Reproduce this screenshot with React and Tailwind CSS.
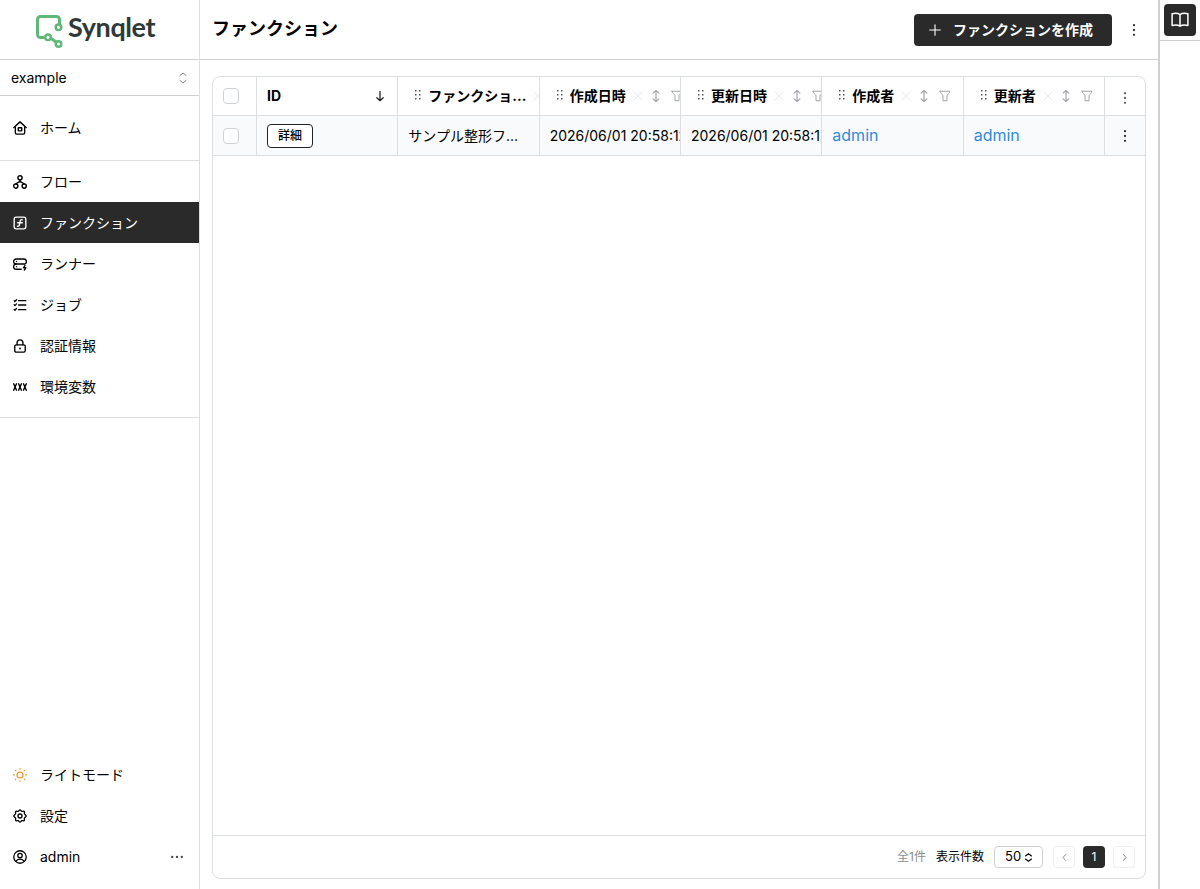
import { useState } from 'react';

const Svg = ({ size = 14, width = 2, className = '', children }) => (
  <svg
    width={size}
    height={size}
    viewBox="0 0 24 24"
    fill="none"
    stroke="currentColor"
    strokeWidth={width}
    strokeLinecap="round"
    strokeLinejoin="round"
    className={`shrink-0 ${className}`}
  >
    {children}
  </svg>
);

const ICONS = {
  home: (
    <Svg width={2.4}>
      <path d="M1.5 11 12 1.500 22.500 11" />
      <path d="M4 10v10a2.500 2.500 0 0 0 2.500 2.500h11A2.500 2.500 0 0 0 20 20V10" />
      <rect x="9" y="11.500" width="6" height="5.500" rx="1" />
    </Svg>
  ),
  flow: (
    <Svg width={2.4}>
      <circle cx="12" cy="4.800" r="3.600" />
      <circle cx="4.800" cy="19" r="3.600" />
      <circle cx="19.200" cy="19" r="3.600" />
      <path d="M12 9v3M5 15l7-4 7 4" />
    </Svg>
  ),
  func: (
    <Svg width={2.3}>
      <rect x="2" y="2" width="20" height="20" rx="3.500" />
      <path d="M16 6.500c-2.700-.8-3.400.5-3.800 2.500l-1.200 6c-.4 2-1.200 3-3.500 2.500M8 11.500h8" />
    </Svg>
  ),
  runner: (
    <Svg width={2.3}>
      <path d="M20.500 12c1.700-.8 2.500-2 2.500-3.800C23 5 21 3.500 18.500 3.500h-13C3 3.500 1 5 1 7.700S3 12 5.500 12h15" />
      <path d="M5.500 12C3 12 1 13.700 1 16.700s2 4.300 4.500 4.300H14" />
      <path d="M6 7.700h.1M6 16.500h.1" />
      <path d="m20.500 14.500-2.500 4h4l-2.500 4" />
    </Svg>
  ),
  job: (
    <Svg width={2.2}>
      <path d="M9.500 4.500H22M9.500 12H22M9.500 20H22" />
      <path d="m2 4.500 1.300 1.500L6 3M2 11.500 3.300 13 6 10M2 19.500 3.300 21 6 18" />
    </Svg>
  ),
  lock: (
    <Svg width={2.3}>
      <rect x="3" y="10" width="18" height="12.500" rx="2.500" />
      <path d="M7 10V6.500a5 5 0 0 1 10 0V10" />
      <circle cx="12" cy="16.200" r=".6" />
    </Svg>
  ),
  env: (
    <Svg width={2.4}>
      <path d="m1.200 6.500 4.800 11M6 6.500l-4.800 11M9.600 6.500l4.800 11M14.400 6.500l-4.800 11M18 6.500l4.800 11M22.800 6.500 18 17.500" />
    </Svg>
  ),
  sun: (
    <Svg width={2.2} className="text-[#e8992e]">
      <circle cx="12" cy="12" r="5" />
      <path d="M12 1.200v.8M12 22v.8M1.200 12H2M22 12h.8M4.300 4.300l.5.500M19.200 19.200l.5.500M4.300 19.700l.5-.5M19.200 4.800l.5-.5" />
    </Svg>
  ),
  gear: (
    <Svg width={2.3}>
      <path d="M12 1.500c1.300 0 2 2.300 3.300 2.600 1.300.3 3-1 4 0s-.2 2.600.2 3.900c.4 1.300 3 2.500 3 4s-2.600 2.600-3 4c-.4 1.300.8 2.900-.2 3.900s-2.700-.3-4 0c-1.300.3-2 2.600-3.300 2.600s-2-2.300-3.300-2.600c-1.300-.3-3 1-4 0s.2-2.600-.2-3.900c-.4-1.400-3-2.500-3-4s2.600-2.700 3-4c.4-1.300-.8-2.900.2-3.900s2.700.3 4 0C10 3.800 10.700 1.500 12 1.500Z" />
      <circle cx="12" cy="12" r="3.400" />
    </Svg>
  ),
  user: (
    <Svg width={2.2}>
      <circle cx="12" cy="12" r="10.700" />
      <circle cx="12" cy="9.500" r="3.800" />
      <path d="M5 19.500c1.500-3 4-3.700 7-3.700s5.500.7 7 3.700" />
    </Svg>
  ),
};

const MENU = [
  { id: 'flow', label: 'フロー' },
  { id: 'func', label: 'ファンクション' },
  { id: 'runner', label: 'ランナー' },
  { id: 'job', label: 'ジョブ' },
  { id: 'lock', label: '認証情報' },
  { id: 'env', label: '環境変数' },
];

const COLUMNS = ['ファンクショ...', '作成日時', '更新日時', '作成者', '更新者'];

const ROWS = [
  {
    id: 1,
    name: 'サンプル整形フ...',
    createdAt: '2026/06/01 20:58:12',
    updatedAt: '2026/06/01 20:58:12',
    createdBy: 'admin',
    updatedBy: 'admin',
  },
];

const GRID = 'grid grid-cols-[44px_repeat(6,minmax(0,1fr))_40px]';
const CELL = 'flex items-center overflow-hidden whitespace-nowrap border-r border-[#dcdfe1]';

const Dots = ({ vertical = true, className = '' }) => (
  <svg width="16" height="16" viewBox="0 0 16 16" fill="currentColor" className={`shrink-0 ${className}`}>
    {[3.2, 8, 12.8].map((p) => (
      <circle key={p} cx={vertical ? 8 : p} cy={vertical ? p : 8} r="1.150" />
    ))}
  </svg>
);

const Grip = () => (
  <svg width="8" height="12" viewBox="0 0 8 12" fill="#555" className="-mt-[2px] shrink-0">
    {[1, 5, 9].map((y) => (
      <g key={y}>
        <rect x="1" y={y} width="1.500" height="1.500" />
        <rect x="5" y={y} width="1.500" height="1.500" />
      </g>
    ))}
  </svg>
);

const Logo = () => (
  <div className="box-content flex h-[59px] items-center border-b border-[#cfd2d4] pl-[35px]">
    <svg width="29" height="36" viewBox="0 0 29 36" fill="none" stroke="#5fb878" strokeWidth="3" className="mt-1 shrink-0">
      <path d="M9.500 23.500h-4a3 3 0 0 1-3-3V5.500a3 3 0 0 1 3-3h16a3 3 0 0 1 3 3v5" />
      <circle cx="23.500" cy="13.300" r="2.800" strokeWidth="2.400" />
      <circle cx="13" cy="23.300" r="2.800" strokeWidth="2.400" />
      <circle cx="23.500" cy="30" r="2.800" strokeWidth="2.400" />
      <path d="m15.500 24 5.500 4" />
    </svg>
    <span className="-mt-[5px] ml-1 font-[Lato,sans-serif] text-[27px] font-bold leading-8 tracking-[-0.400px] text-[#30393a]">
      Synqlet
    </span>
  </div>
);

const NavItem = ({ icon, label, active, onClick, children }) => (
  <button
    type="button"
    onClick={onClick}
    className={`flex h-[41px] w-full items-center gap-[13px] pl-[13px] pr-[14px] text-left text-sm ${
      active ? 'bg-[#2a2a2a] text-white' : 'text-black'
    }`}
  >
    {ICONS[icon]}
    <span>{label}</span>
    {children}
  </button>
);

const Sidebar = () => {
  const [current, setCurrent] = useState('func');

  return (
    <nav className="flex w-[200px] shrink-0 flex-col border-r border-[#dcdfe1]">
      <Logo />
      <div className="flex h-9 items-center justify-between border-b border-[#cfd2d4] pl-[11px] pr-[10px] text-sm">
        example
        <Svg size={12} width={1.8} className="text-[#777]">
          <path d="m6 7 6-5 6 5M6 17l6 5 6-5" />
        </Svg>
      </div>
      <div className="border-b border-[#dcdfe1] pb-3 pt-[11px]">
        <NavItem icon="home" label="ホーム" />
      </div>
      <div className="border-b border-[#dcdfe1] pb-[10px]">
        {MENU.map((item) => (
          <NavItem
            key={item.id}
            icon={item.id}
            label={item.label}
            active={current === item.id}
            onClick={() => setCurrent(item.id)}
          />
        ))}
      </div>
      <div className="mt-auto pb-3">
        <NavItem icon="sun" label="ライトモード" />
        <NavItem icon="gear" label="設定" />
        <NavItem icon="user" label="admin">
          <Dots vertical={false} className="ml-auto text-[#444]" />
        </NavItem>
      </div>
    </nav>
  );
};

const Checkbox = () => (
  <input type="checkbox" className="size-4 appearance-none rounded border border-[#d0d3d6] bg-white" />
);

const HeaderCell = ({ label }) => (
  <div className={`${CELL} pl-4 text-sm font-bold`}>
    <Grip />
    <span className="ml-[6px] shrink-0">{label}</span>
    <Svg size={12} width={1.6} className="ml-[6px] text-[#e2e4e6]">
      <path d="M4 4l16 16M20 4 4 20" />
    </Svg>
    <Svg size={14} width={2} className="ml-[5px] text-[#a0a4a8]">
      <path d="M12 2.500v19M7 7l5-4.500L17 7M7 17l5 4.500 5-4.500" />
    </Svg>
    <Svg size={12} width={2} className="ml-[8px] text-[#a0a4a8]">
      <path d="M2 2.500h20c0 3.500-6 7-6 9v10H8v-10c0-2-6-5.500-6-9Z" />
    </Svg>
  </div>
);

const FunctionTable = () => (
  <div className="flex flex-1 flex-col overflow-hidden rounded-lg border border-[#dcdfe1]">
    <div className={`${GRID} h-[39px] border-b border-[#dcdfe1]`}>
      <div className={`${CELL} pl-[10px]`}>
        <Checkbox />
      </div>
      <div className={`${CELL} justify-between px-[10px] text-sm font-bold`}>
        ID
        <Svg size={14} width={2.2} className="text-[#222]">
          <path d="M12 4v16M6.500 15l5.500 5 5.500-5" />
        </Svg>
      </div>
      {COLUMNS.map((label) => (
        <HeaderCell key={label} label={label} />
      ))}
      <div className="flex items-center justify-center pt-1">
        <Dots className="text-[#666]" />
      </div>
    </div>
    {ROWS.map((row) => (
      <div key={row.id} className={`${GRID} h-10 border-b border-[#dcdfe1] bg-[#f8fafc] text-sm`}>
        <div className={`${CELL} pl-[10px]`}>
          <Checkbox />
        </div>
        <div className={`${CELL} pl-[10px]`}>
          <button type="button" className="h-6 rounded border border-[#222] bg-white px-[10px] text-xs font-medium">
            詳細
          </button>
        </div>
        <div className={`${CELL} pl-[10px]`}>{row.name}</div>
        <div className={`${CELL} pl-[10px]`}>{row.createdAt}</div>
        <div className={`${CELL} pl-[10px]`}>{row.updatedAt}</div>
        <div className={`${CELL} pb-[2px] pl-[10px] text-base text-[#2f8bdc]`}>{row.createdBy}</div>
        <div className={`${CELL} pb-[2px] pl-[10px] text-base text-[#2f8bdc]`}>{row.updatedBy}</div>
        <div className="flex items-center justify-center">
          <Dots className="text-[#333]" />
        </div>
      </div>
    ))}
    <div className="mt-auto flex h-[43px] items-center justify-end border-t border-[#dcdfe1] pr-[10px] text-xs">
      <span className="text-[#8a8d90]">全1件</span>
      <span className="ml-[10px]">表示件数</span>
      <button
        type="button"
        className="ml-[10px] flex h-[22px] w-[49px] items-center gap-1 rounded border border-[#cdd0d3] pl-[10px] text-[13px]"
      >
        50
        <Svg size={9} width={3} className="-ml-px">
          <path d="m4 8 8-6 8 6M4 16l8 6 8-6" />
        </Svg>
      </button>
      <button
        type="button"
        className="ml-[10px] flex size-[22px] items-center justify-center rounded border border-[#eceeef] text-[#888]"
      >
        <Svg size={9} width={2.6}>
          <path d="m15 4-7 8 7 8" />
        </Svg>
      </button>
      <button type="button" className="ml-2 size-[22px] rounded bg-[#2a2a2a] text-white">
        1
      </button>
      <button
        type="button"
        className="ml-2 flex size-[22px] items-center justify-center rounded border border-[#eceeef] text-[#888]"
      >
        <Svg size={9} width={2.6}>
          <path d="m9 4 7 8-7 8" />
        </Svg>
      </button>
    </div>
  </div>
);

const App = () => (
  <div className="flex h-screen bg-white font-[Inter,'Noto_Sans_CJK_JP',sans-serif] text-black">
    <Sidebar />
    <main className="flex min-w-0 flex-1 flex-col border-r-2 border-[#cdcfd1]">
      <header className="flex h-[60px] shrink-0 items-center justify-between border-b border-[#cfd2d4] pl-3 pr-4">
        <h1 className="-mt-[2px] text-lg font-bold">ファンクション</h1>
        <div className="flex items-center gap-[14px]">
          <button
            type="button"
            className="flex h-8 w-[198px] items-center gap-[11px] rounded bg-[#2a2a2a] pl-[14px] text-sm font-bold text-white"
          >
            <Svg size={14} width={1.9}>
              <path d="M12 3v18M3 12h18" />
            </Svg>
            ファンクションを作成
          </button>
          <Dots className="text-[#333]" />
        </div>
      </header>
      <div className="flex flex-1 px-3 pb-[10px] pt-4">
        <FunctionTable />
      </div>
    </main>
    <aside className="w-10 shrink-0">
      <div className="flex h-[41px] justify-center border-b border-[#cfd2d4] pt-1">
        <button type="button" className="flex size-8 items-center justify-center rounded bg-[#2a2a2a] text-white">
          <Svg size={20} width={1.8}>
            <path d="M12 5.500C10 4 6 3.700 2.500 4.500v14c3.500-.8 7.500-.5 9.500 1 2-1.500 6-1.800 9.500-1v-14C18 3.700 14 4 12 5.500Zm0 0v14" />
          </Svg>
        </button>
      </div>
    </aside>
  </div>
);

export default App;
